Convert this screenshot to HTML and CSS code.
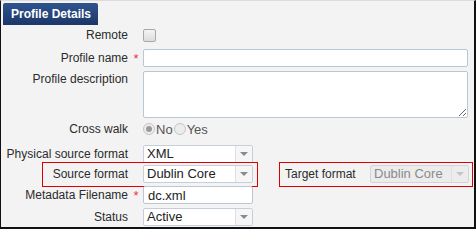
FILE: index.html
```html
<!DOCTYPE html>
<html lang="en">
<head>
    <meta charset="UTF-8">
    <title>Profile Details</title>
    <link rel="stylesheet" href="styles.css">
</head>
<body>
    <div class="frame">
        <div class="tabs">
            <div class="tab">Profile Details</div>
        </div>

        <div class="form">
            <!-- Remote -->
            <div class="row row-check">
                <label class="label">Remote</label>
                <span class="star"></span>
                <span class="checkbox"></span>
            </div>

            <div class="row row-input">
                <label class="label">Profile name</label>
                <span class="star">*</span>
                <input class="input wide" type="text">
            </div>

            <div class="row row-area">
                <label class="label">Profile description</label>
                <span class="star"></span>
                <textarea class="area"></textarea>
            </div>

            <div class="row row-radio">
                <label class="label">Cross walk</label>
                <span class="star"></span>
                <span class="radio checked"></span><span class="radio-text">No</span>
                <span class="radio"></span><span class="radio-text">Yes</span>
            </div>

            <div class="row row-select">
                <label class="label">Physical source format</label>
                <span class="star"></span>
                <div class="select"><span class="value">XML</span><span class="arrow"></span></div>
            </div>

            <!-- Zaznaczone pola -->
            <div class="row row-hl">
                <div class="hl hl-source">
                    <label class="label">Source format</label>
                    <span class="star"></span>
                    <div class="select"><span class="value">Dublin Core</span><span class="arrow"></span></div>
                </div>
                <div class="hl hl-target">
                    <label class="label-plain">Target format</label>
                    <div class="select disabled"><span class="value">Dublin Core</span><span class="arrow"></span></div>
                </div>
            </div>

            <div class="row row-input2">
                <label class="label">Metadata Filename</label>
                <span class="star">*</span>
                <input class="input short" type="text" value="dc.xml">
            </div>

            <div class="row row-status">
                <label class="label">Status</label>
                <span class="star"></span>
                <div class="select"><span class="value">Active</span><span class="arrow"></span></div>
            </div>
        </div>
    </div>
</body>
</html>
```

FILE: styles.css
```css
body {
    margin: 0;
    font-family: Arial, "Liberation Sans", sans-serif;
    font-size: 12px;
    color: #2b2b2b;
    background-color: #ffffff;
}
.frame {
    width: 473px;
    height: 226px;
    background-color: #f3f3f3;
    border-left: 1px solid #111;
    border-right: 2px solid #111;
    border-bottom: 2px solid #111;
    border-top: 1px solid #dcdcdc;
    overflow: hidden;
}
.tabs {
    height: 22px;
    padding: 2px 0 0 2px;
}
.tab {
    display: inline-block;
    height: 22px;
    line-height: 22px;
    padding: 0 7px 0 8px;
    background: linear-gradient(#2f5590, #1b3668);
    color: #ffffff;
    font-weight: bold;
    font-size: 12px;
    border-radius: 2px 2px 0 0;
}
.form {
    padding-top: 1px;
}
.row {
    display: flex;
    align-items: center;
}
.label {
    width: 127px;
    text-align: right;
    flex: none;
}
.star {
    width: 15px;
    flex: none;
    color: #e8344a;
    text-align: center;
    font-size: 13px;
    padding-left: 1px;
    box-sizing: border-box;
}
.row-check {
    height: 18px;
}
.checkbox {
    width: 11px;
    height: 11px;
    border: 1px solid #a9a9a9;
    border-radius: 2px;
    background: linear-gradient(#f4f4f4, #dcdcdc);
}
.row-input {
    margin-top: 5px;
    height: 18px;
}
.input {
    box-sizing: border-box;
    height: 18px;
    border: 1px solid #b9c6d6;
    border-radius: 2px;
    background-color: #ffffff;
    font-family: Arial, "Liberation Sans", sans-serif;
    font-size: 13px;
    color: #222;
    padding: 0 4px;
}
.wide {
    width: 325px;
}
.short {
    width: 110px;
}
.row-area {
    margin-top: 4px;
    align-items: flex-start;
    height: 47px;
}
.row-area .label {
    padding-top: 1px;
}
.area {
    box-sizing: border-box;
    width: 325px;
    height: 47px;
    margin: 0;
    border: 1px solid #b9c6d6;
    border-radius: 2px;
    background-color: #ffffff;
}
.row-radio {
    height: 20px;
    margin-top: 1px;
}
.radio {
    width: 10px;
    height: 10px;
    border: 1px solid #c4c4c4;
    border-radius: 50%;
    background-color: #ececec;
    position: relative;
}
.radio.checked::after {
    content: "";
    position: absolute;
    left: 2px;
    top: 2px;
    width: 6px;
    height: 6px;
    border-radius: 50%;
    background-color: #9a9a9a;
}
.radio-text {
    color: #555;
    margin: 0 1px 0 1px;
    font-size: 13px;
}
.row-select {
    height: 18px;
    margin-top: 6px;
}
.row-status {
    height: 18px;
    margin-top: 4px;
}
.select {
    box-sizing: border-box;
    width: 110px;
    height: 18px;
    flex: none;
    display: flex;
    border: 1px solid #c6ced9;
    border-radius: 2px;
    background-color: #ffffff;
}
.select .value {
    flex: 1;
    padding-left: 3px;
    line-height: 16px;
    font-size: 13px;
    color: #222;
    white-space: nowrap;
    overflow: hidden;
}
.select .arrow {
    width: 16px;
    flex: none;
    border-left: 1px solid #e0e0e0;
    background-color: #f6f6f6;
    position: relative;
}
.select .arrow::after {
    content: "";
    position: absolute;
    left: 4px;
    top: 6px;
    border-left: 4px solid transparent;
    border-right: 4px solid transparent;
    border-top: 4px solid #8a8a8a;
}
.select.disabled {
    background-color: #ececec;
    border-color: #cfd5dc;
    width: 99px;
}
.select.disabled .value {
    color: #8a8a8a;
}
.select.disabled .arrow {
    background-color: #ececec;
}
.select.disabled .arrow::after {
    border-top-color: #c4c4c4;
}
.row-hl {
    height: 24px;
    margin-top: -1px;
}
.hl {
    display: flex;
    align-items: center;
    border: 1px solid #e00000;
    box-sizing: border-box;
    height: 25px;
    flex: none;
}
.hl-source {
    margin-left: 41px;
    width: 216px;
}
.hl-source .label {
    width: 85px;
}
.hl-target {
    margin-left: 21px;
    width: 194px;
    padding-left: 5px;
}
.label-plain {
    width: 85px;
    flex: none;
}
.row-input2 {
    height: 18px;
    margin-top: 0;
}
```
